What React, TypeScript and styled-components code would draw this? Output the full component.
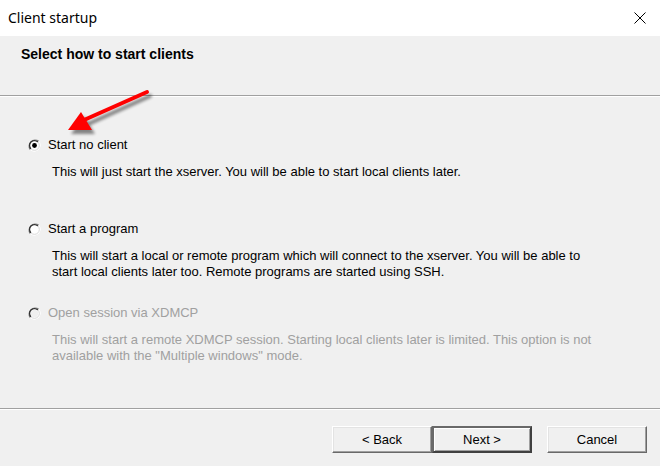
import React from "react";
import styled, { createGlobalStyle } from "styled-components";

const Global = createGlobalStyle`
  html, body { margin: 0; padding: 0; background: #f0f0f0; }
  #root { width: 660px; height: 466px; }
  * { box-sizing: border-box; }
`;

const Window = styled.div`
  position: relative;
  width: 660px;
  height: 466px;
  display: flex;
  flex-direction: column;
  background: #f0f0f0;
  font-family: "Liberation Sans", Arial, sans-serif;
  font-size: 13px;
  color: #000;
  overflow: hidden;
`;

const TitleBar = styled.div`
  height: 36px;
  background: #fff;
  display: flex;
  align-items: center;
  justify-content: space-between;
  padding: 0 14px 0 8px;
`;

const Title = styled.div`
  font-family: "Noto Sans", "Open Sans", sans-serif;
  font-size: 14px;
  color: #000;
  margin-top: -1px;
`;

const Header = styled.div`
  height: 60px;
  padding: 10px 21px 0;
  border-bottom: 1px solid #a0a0a0;
  box-shadow: 0 1px 0 #fff;
`;

const Heading = styled.div`
  font-weight: bold;
  font-size: 14px;
  line-height: 17px;
`;

const Body = styled.div`
  flex: 1;
  padding: 41px 0 0 28px;
  display: flex;
  flex-direction: column;
`;

const Option = styled.div<{ $disabled?: boolean }>`
  height: 84px;
  display: flex;
  flex-direction: column;
  color: ${(p) => (p.$disabled ? "#a0a0a0" : "#000")};
`;

const OptionRow = styled.div`
  height: 16px;
  display: flex;
  align-items: center;
  gap: 7px;
  line-height: 16px;
`;

const Description = styled.div`
  margin-top: 11px;
  margin-left: 24px;
  line-height: 16px;
  width: 548px;
`;

const Footer = styled.div`
  height: 58px;
  border-top: 1px solid #a0a0a0;
  box-shadow: inset 0 1px 0 #fff;
  display: flex;
  justify-content: flex-end;
  align-items: flex-start;
  padding: 17px 13px 0 0;
`;

const ButtonGroup = styled.div`
  display: flex;
  margin-right: 15px;
`;

const Button = styled.button<{ $default?: boolean }>`
  width: 100px;
  height: 27px;
  padding: 0;
  font-family: "Liberation Sans", Arial, sans-serif;
  font-size: 13px;
  color: #000;
  background: #f0f0f0;
  border: 1px solid;
  border-color: #fff #696969 #696969 #fff;
  box-shadow: inset -1px -1px 0 #a0a0a0, inset 1px 1px 0 #e3e3e3;
  ${(p) =>
    p.$default &&
    `border: 2px solid; border-color: #696969 #404040 #404040 #696969; box-shadow: inset 1px 1px 0 #fff, inset -1px -1px 0 #a0a0a0;`}
`;

const Arrow = styled.svg`
  position: absolute;
  left: 0;
  top: 0;
  pointer-events: none;
`;

function Radio({ checked, disabled }: { checked?: boolean; disabled?: boolean }) {
  return (
    <svg width="13" height="13" viewBox="0 0 13 13">
      <circle cx="6.5" cy="6.5" r="6" fill="#fff" />
      <path d="M2.3 10.7 A6 6 0 0 1 10.7 2.3" stroke="#808080" strokeWidth="1.3" fill="none" />
      <path d="M3 9.9 A4.8 4.8 0 0 1 9.9 3" stroke="#303030" strokeWidth="1.3" fill="none" />
      <path d="M10.7 2.3 A6 6 0 0 1 2.3 10.7" stroke="#fff" strokeWidth="1" fill="none" />
      <path d="M9.9 3 A4.8 4.8 0 0 1 3 9.9" stroke="#d8d8d8" strokeWidth="1" fill="none" />
      <circle cx="6.5" cy="6.5" r="3.7" fill={disabled ? "#f0f0f0" : "#fff"} />
      {checked && <circle cx="6.5" cy="6.5" r="2.4" fill="#000" />}
    </svg>
  );
}

export default function App() {
  return (
    <Window>
      <Global />
      <TitleBar>
        <Title>Client startup</Title>
        <svg width="12" height="12" viewBox="0 0 12 12">
          <path d="M0.5 0.5 L11.5 11.5 M11.5 0.5 L0.5 11.5" stroke="#000" strokeWidth="1" />
        </svg>
      </TitleBar>
      <Header>
        <Heading>Select how to start clients</Heading>
      </Header>
      <Body>
        <Option>
          <OptionRow>
            <Radio checked />
            <span>Start no client</span>
          </OptionRow>
          <Description>
            This will just start the xserver. You will be able to start local clients later.
          </Description>
        </Option>
        <Option>
          <OptionRow>
            <Radio />
            <span>Start a program</span>
          </OptionRow>
          <Description>
            This will start a local or remote program which will connect to the xserver. You will be able to
            start local clients later too. Remote programs are started using SSH.
          </Description>
        </Option>
        <Option $disabled>
          <OptionRow>
            <Radio disabled />
            <span>Open session via XDMCP</span>
          </OptionRow>
          <Description>
            This will start a remote XDMCP session. Starting local clients later is limited. This option is not
            available with the "Multiple windows" mode.
          </Description>
        </Option>
      </Body>
      <Footer>
        <ButtonGroup>
          <Button>&lt; Back</Button>
          <Button $default>Next &gt;</Button>
        </ButtonGroup>
        <Button>Cancel</Button>
      </Footer>
      <Arrow width="660" height="466">
        <defs>
          <filter id="sh" x="-20%" y="-20%" width="140%" height="140%">
            <feGaussianBlur stdDeviation="1.6" />
          </filter>
        </defs>
        <g transform="translate(3,4)" opacity="0.45" filter="url(#sh)">
          <path d="M147 92 L83 121" stroke="#000" strokeWidth="4" strokeLinecap="round" />
          <polygon points="68,130 81,112 92,130" fill="#000" />
        </g>
        <path d="M147 92 L84 120" stroke="#f00" strokeWidth="4" strokeLinecap="round" />
        <polygon points="68,130 81,112 92,130" fill="#f00" />
      </Arrow>
    </Window>
  );
}
